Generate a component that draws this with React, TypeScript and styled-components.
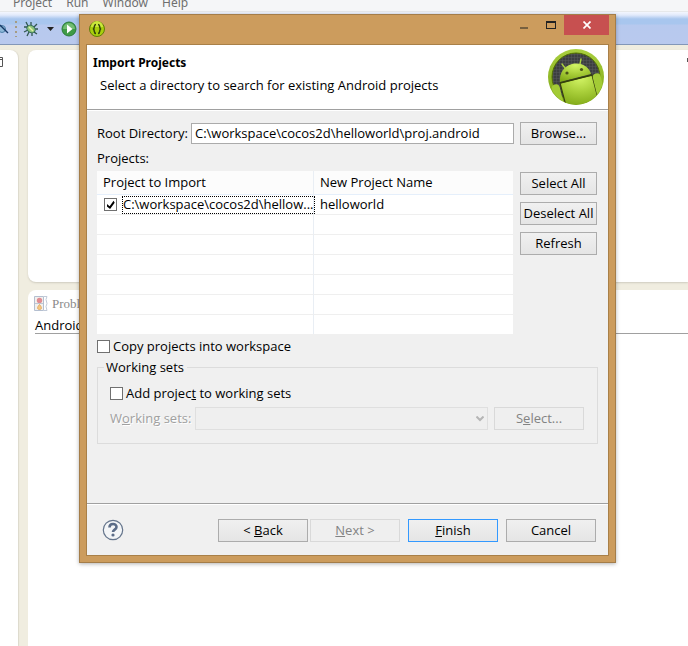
import React from "react";
import styled, { createGlobalStyle } from "styled-components";

const GlobalStyle = createGlobalStyle`
  *, *::before, *::after { box-sizing: border-box; }
  html, body { margin: 0; padding: 0; }
  body, button, input, select, table {
    font-family: "Open Sans", "Noto Sans", sans-serif;
    font-size: 13px;
    line-height: 16px;
    color: #000;
  }
`;

/* ---------- IDE behind the dialog ---------- */

const Workbench = styled.main`
  position: relative;
  display: flex;
  flex-direction: column;
  min-height: 100vh;
  overflow: hidden;
  background: #f0ede0;
`;

const MenuBar = styled.nav`
  display: flex;
  align-items: flex-end;
  gap: 14px;
  height: 12px;
  padding: 0 13px;
  background: #f5f6f8;
  border-bottom: 1px solid #e6e8ea;
`;

const MenuItem = styled.button`
  flex: none;
  padding: 0;
  border: 0;
  background: none;
  font-family: "Noto Sans", sans-serif;
  font-size: 12px;
  color: #6f6f6f;
`;

const Toolbar = styled.div`
  display: flex;
  align-items: center;
  height: 33px;
  padding-top: 2px;
  background: linear-gradient(#f3f6fe 0, #e2eafb 3px, #a8c6ee 7px, #a8c6ee 12px, #b7c9ee 13px, #b9c9ee 100%);
  border-bottom: 1px solid #8397b8;
`;

const ToolButton = styled.button<{ $width: number }>`
  display: flex;
  justify-content: center;
  width: ${(p) => p.$width}px;
  padding: 0;
  border: 0;
  background: none;
`;

const Grip = styled.span`
  width: 2px;
  height: 16px;
  margin: 0 4px 0 6px;
  background: repeating-linear-gradient(#a59b83 0 2px, transparent 2px 5px);
`;

const Panes = styled.div`
  display: flex;
  flex: 1;
  gap: 10px;
  padding-top: 5px;
`;

const SidePane = styled.aside`
  width: 18px;
  padding-top: 4px;
  background: #fff;
  border-radius: 0 8px 0 0;
  box-shadow: 1px 0 1px #dcd9cc;
`;

const Column = styled.div`
  display: flex;
  flex: 1;
  flex-direction: column;
  gap: 8px;
`;

const EditorPane = styled.section`
  display: flex;
  justify-content: flex-end;
  height: 232px;
  padding-top: 8px;
  background: #fff;
  border-radius: 8px 0 0 8px;
  box-shadow: 0 1px 2px #cfccbf;
`;

const EditorMark = styled.span`
  width: 1px;
  height: 4px;
  background: #555;
`;

const ProblemsPane = styled.section`
  flex: 1;
  padding: 5px 0 0 6px;
  background: #fff;
  border-radius: 8px 0 0 0;
`;

const PaneTab = styled.div`
  display: flex;
  align-items: center;
  gap: 4px;
  height: 18px;
  color: #8a8a8a;
  font-family: "Liberation Serif", serif;
`;

const PaneCaption = styled.div`
  margin-left: 1px;
  padding-top: 4px;
  border-bottom: 1px solid #a0a0a0;
`;

/* ---------- Dialog ---------- */

const Dialog = styled.section`
  position: absolute;
  top: 14px;
  left: 79px;
  right: 72px;
  padding: 0 6px 6px;
  border: 1px solid #a47d49;
  background: #cc9c5d;
  box-shadow: 0 1px 4px rgba(0, 0, 0, 0.3);
`;

const TitleBar = styled.header`
  display: flex;
  align-items: flex-start;
  justify-content: space-between;
  height: 29px;
`;

const AppIcon = styled.svg`
  margin: 5px 0 0 2px;
`;

const WindowButtons = styled.div`
  display: flex;
`;

const WindowButton = styled.button<{ $close?: boolean }>`
  display: flex;
  align-items: center;
  justify-content: center;
  width: ${(p) => (p.$close ? 45 : 27)}px;
  height: 20px;
  padding: 0;
  border: 0;
  background: ${(p) => (p.$close ? "#c75050" : "transparent")};
`;

const Client = styled.div`
  border: 1px solid #a98048;
  background: #f0f0f0;
`;

const Banner = styled.div`
  display: flex;
  justify-content: space-between;
  height: 64px;
  padding: 3px 3px 0 6px;
  background: #fff;
`;

const Title = styled.h1`
  margin: 7px 0 6px;
  font-family: "Noto Sans", sans-serif;
  font-size: 12px;
  line-height: 16px;
`;

const Subtitle = styled.p`
  margin: 0 0 0 7px;
`;

const Rule = styled.div`
  height: 2px;
  background: #fff;
  border-top: 1px solid #a0a0a0;
`;

const Body = styled.div`
  display: flex;
  flex-direction: column;
  padding: 11px 10px 59px;
`;

const Row = styled.div<{ $gap?: number }>`
  display: flex;
  align-items: center;
  gap: ${(p) => p.$gap ?? 6}px;
`;

const DirectoryRow = styled(Row)`
  padding-right: 1px;
`;

const Field = styled(Row)`
  flex: 1;
  min-width: 0;
`;

const FieldLabel = styled.label<{ $disabled?: boolean }>`
  flex: none;
  padding-bottom: 1px;
  color: ${(p) => (p.$disabled ? "#a0a0a0" : "#000")};
  text-shadow: ${(p) => (p.$disabled ? "1px 1px 0 #fff" : "none")};
`;

const TextBox = styled.input`
  flex: 1;
  min-width: 0;
  height: 21px;
  padding: 0 3px 2px;
  border: 1px solid #ababab;
  background: #fff;
`;

const PushButton = styled.button<{ $width?: number; $default?: boolean }>`
  flex: none;
  width: ${(p) => p.$width ?? 90}px;
  height: 23px;
  padding: 0 0 2px;
  border: 1px solid ${(p) => (p.$default ? "#3399ff" : "#acacac")};
  background: linear-gradient(#f0f0f0, #e5e5e5);
  white-space: nowrap;

  &:disabled {
    border-color: #d9d9d9;
    background: #efefef;
    color: #838383;
  }
`;

const ListCaption = styled.div`
  padding: 5px 0;
`;

const ListArea = styled.div`
  display: flex;
  align-items: flex-start;
  gap: 7px;
  padding-right: 1px;
`;

const Table = styled.table`
  flex: 1;
  width: 100%;
  table-layout: fixed;
  border-collapse: separate;
  border-spacing: 0;
  background: #fff;

  th, td {
    height: 20px;
    padding: 0 6px 1px;
    border-bottom: 1px solid #efefef;
    text-align: left;
    font-weight: normal;
    white-space: nowrap;
  }
  th {
    height: 24px;
    padding-bottom: 2px;
    background: #fcfcfc;
    border-bottom-color: #e5effb;
  }
  th:first-child, td:first-child {
    width: 217px;
    border-right: 1px solid #e9eef4;
  }
  td:first-child { padding: 0 1px 0 7px; }
  tbody tr:last-child td { height: 19px; border-bottom: 0; }
`;

const FocusText = styled.label`
  height: 18px;
  border: 1px dotted #000;
  line-height: 15px;
`;

const ButtonStack = styled.div`
  display: flex;
  flex-direction: column;
  gap: 7px;
  padding-top: 1px;
`;

const CheckBox = styled.input`
  flex: none;
  appearance: none;
  width: 13px;
  height: 13px;
  margin: 0;
  border: 1px solid #707070;
  background: #fff;

  &:checked::before {
    content: "";
    display: block;
    width: 11px;
    height: 11px;
    background: #000;
    clip-path: polygon(18% 45%, 42% 65%, 78% 16%, 88% 34%, 46% 90%, 18% 68%);
  }
`;

const CopyRow = styled(Row)`
  padding: 4px 0;
`;

const Group = styled.fieldset`
  display: flex;
  flex-direction: column;
  gap: 5px;
  min-width: 0;
  margin: 0;
  padding: 10px 13px 13px 12px;
  border: 1px solid #dcdcdc;
`;

const Legend = styled.legend`
  margin-left: -6px;
  padding: 0 3px 0 2px;
`;

const SelectWrap = styled.div`
  display: grid;
  flex: 1;
  align-items: center;

  > * { grid-area: 1 / 1; }
  > svg { z-index: 1; justify-self: end; margin-right: 4px; pointer-events: none; }
`;

const Select = styled.select`
  appearance: none;
  width: 100%;
  height: 23px;
  border: 1px solid #d9d9d9;
  border-radius: 0;
  background: #efefef;
`;

const Footer = styled.footer`
  display: flex;
  align-items: flex-start;
  justify-content: space-between;
  padding: 14px 12px 13px 15px;
`;

const HelpButton = styled.button`
  display: flex;
  padding: 0;
  border: 0;
  background: none;
`;

const ButtonPair = styled.div`
  display: flex;
  gap: 2px;
`;

/* ---------- Drawings ---------- */

const BugIcon = () => (
  <svg width="16" height="16" viewBox="0 0 16 16" fill="none">
    <path d="M3 1l2 4M8 1v3M1 6h4M1 11l4-2M4 15l2-4M9 15v-4M15 8h-4M14 3l-3 3M14 13l-3-2" stroke="#31564f" strokeWidth="1.3" />
    <ellipse cx="8" cy="8" rx="4.5" ry="3.4" transform="rotate(35 8 8)" fill="#8fc47c" stroke="#2c6651" />
    <path d="M6 6l4 4" stroke="#e6f3a8" strokeWidth="1.4" />
  </svg>
);

const RunIcon = () => (
  <svg width="16" height="16" viewBox="0 0 16 16">
    <circle cx="8" cy="8" r="7" fill="#3f9b46" stroke="#2b7c3b" />
    <path d="M2 8a6 6 0 0 1 12 0z" fill="#72bd72" />
    <path d="M6 3.5v9L11.5 8z" fill="#fff" />
  </svg>
);

const SearchOffIcon = () => (
  <svg width="9" height="12" viewBox="0 0 9 12" fill="none">
    <circle cx="2" cy="6" r="3.5" fill="#8eb8d8" stroke="#4b7fa8" />
    <path d="M0 2l8 8" stroke="#173765" strokeWidth="1.3" />
  </svg>
);

const ProblemsIcon = () => (
  <svg width="14" height="16" viewBox="0 0 14 16">
    <path d="M.5.5h9v14h-9z" fill="#f2f0ed" stroke="#b4bfd0" />
    <path d="M10 .5h3l-1 3 1 4-1 3 1 4h-3" fill="#fff" stroke="#c1cad8" />
    <circle cx="5.5" cy="4.5" r="2.7" fill="#e08d92" />
    <path d="M5.5 8.500c2 2 3 5 0 5s-2-3 0-5z" fill="#f6c983" stroke="#e3ad67" />
    <path d="M1 7.5h8" stroke="#bfc7d2" />
  </svg>
);

const AndroidBadge = () => (
  <svg width="58" height="58" viewBox="0 0 58 58">
    <defs>
      <linearGradient id="rim" x1="0" y1="0" x2="0" y2="1">
        <stop offset="0" stopColor="#a9cf3e" />
        <stop offset="1" stopColor="#7ba312" />
      </linearGradient>
      <radialGradient id="skin" cx=".5" cy=".1" r=".9">
        <stop offset="0" stopColor="#d2f465" />
        <stop offset=".5" stopColor="#a9cf3a" />
        <stop offset="1" stopColor="#82aa18" />
      </radialGradient>
      <pattern id="mesh" width="3" height="3" patternUnits="userSpaceOnUse">
        <rect width="3" height="3" fill="#3c3e40" />
        <path d="M0 0h3M0 0v3" stroke="#56585a" />
      </pattern>
      <clipPath id="disc"><circle cx="29" cy="29" r="27.5" /></clipPath>
      <clipPath id="hole"><circle cx="29" cy="29" r="24" /></clipPath>
    </defs>
    <circle cx="29" cy="29" r="28" fill="url(#rim)" />
    <circle cx="29" cy="29" r="24" fill="url(#mesh)" stroke="#527000" />
    <g clipPath="url(#disc)">
      <path d="M13 35L45 27l8 31H19z" fill="url(#skin)" stroke="#37400e" strokeWidth="1.2" />
      <rect x="7" y="36" width="8" height="26" rx="4" fill="#a3cb35" transform="rotate(-14 11 49)" />
      <rect x="48" y="25" width="8" height="26" rx="4" fill="#a3cb35" transform="rotate(-14 52 38)" />
    </g>
    <g clipPath="url(#hole)" fill="none">
      <path d="M18 20l-3-4M33 16l1-5" stroke="#a9d13e" strokeWidth="1.4" strokeLinecap="round" />
      <path d="M13 34C12 25 17 18 25 16c10-2 17 3 19 10z" fill="url(#skin)" />
    </g>
    <path d="M13 35L45 27" stroke="#33400b" strokeWidth="1.4" />
    <circle cx="20" cy="25" r="1.6" fill="#4a5418" />
    <circle cx="34.5" cy="21.5" r="1.6" fill="#4a5418" />
  </svg>
);

const HelpIcon = () => (
  <svg width="22" height="22" viewBox="0 0 22 22" fill="none">
    <circle cx="11" cy="11" r="9.7" fill="#f3f5f7" stroke="#65758c" strokeWidth="1.2" />
    <path d="M7.5 8.500C7.5 4 14.5 4 14.5 8c0 2.600-3.500 2.600-3.500 5" stroke="#5c6d88" strokeWidth="2.6" />
    <circle cx="11" cy="16" r="1.6" fill="#5c6d88" />
  </svg>
);

const emptyRows = [0, 1, 2, 3, 4, 5];

export default function App() {
  return (
    <Workbench>
      <GlobalStyle />
      <MenuBar>
        <MenuItem>Project</MenuItem>
        <MenuItem>Run</MenuItem>
        <MenuItem>Window</MenuItem>
        <MenuItem>Help</MenuItem>
      </MenuBar>
      <Toolbar>
        <ToolButton $width={9} aria-label="Search"><SearchOffIcon /></ToolButton>
        <Grip />
        <ToolButton $width={20} aria-label="Debug"><BugIcon /></ToolButton>
        <ToolButton $width={18} aria-label="Debug options">
          <svg width="7" height="4" viewBox="0 0 7 4"><path d="M0 0h7L3.5 4z" fill="#222" /></svg>
        </ToolButton>
        <ToolButton $width={20} aria-label="Run"><RunIcon /></ToolButton>
      </Toolbar>
      <Panes>
        <SidePane>
          <svg width="3" height="10" viewBox="0 0 3 10" fill="none"><path d="M0 .5h2.500v9H0M0 2.500h2" stroke="#555" /></svg>
        </SidePane>
        <Column>
          <EditorPane><EditorMark /></EditorPane>
          <ProblemsPane>
            <PaneTab><ProblemsIcon />Problems</PaneTab>
            <PaneCaption>Android</PaneCaption>
          </ProblemsPane>
        </Column>
      </Panes>

      <Dialog role="dialog" aria-labelledby="dialog-title">
        <TitleBar>
          <AppIcon width="18" height="18" viewBox="0 0 18 18" fill="none">
            <circle cx="9" cy="9" r="7.5" fill="#a8cf0c" stroke="#5f7d0a" />
            <path d="M3 7a6 6 0 0 1 12 0" fill="#cbe83c" />
            <path d="M8 4.500C5.500 4.500 7 7.500 5.500 9c1.500 1.500 0 4.500 2.500 4.500M10 4.500c2.500 0 1 3 2.500 4.500-1.500 1.500 0 4.500-2.500 4.500" stroke="#33440a" strokeWidth="1.5" />
          </AppIcon>
          <WindowButtons>
            <WindowButton aria-label="Minimize">
              <svg width="8" height="8" viewBox="0 0 8 8"><path d="M0 6h8v2H0z" fill="#77603f" /></svg>
            </WindowButton>
            <WindowButton aria-label="Maximize">
              <svg width="10" height="8" viewBox="0 0 10 8" fill="#222"><path fillRule="evenodd" d="M0 0h10v8H0zM1 2v5h8V2z" /></svg>
            </WindowButton>
            <WindowButton $close aria-label="Close">
              <svg width="8" height="8" viewBox="0 0 8 8"><path d="M.5.5l7 7M7.5.5l-7 7" stroke="#fff" strokeWidth="1.7" /></svg>
            </WindowButton>
          </WindowButtons>
        </TitleBar>
        <Client>
          <Banner>
            <div>
              <Title id="dialog-title">Import Projects</Title>
              <Subtitle>Select a directory to search for existing Android projects</Subtitle>
            </div>
            <AndroidBadge />
          </Banner>
          <Rule />
          <Body>
            <DirectoryRow>
              <Field $gap={3}>
                <FieldLabel htmlFor="root">Root Directory:</FieldLabel>
                <TextBox id="root" defaultValue="C:\workspace\cocos2d\helloworld\proj.android" />
              </Field>
              <PushButton $width={77}>Browse...</PushButton>
            </DirectoryRow>
            <ListCaption>Projects:</ListCaption>
            <ListArea>
              <Table>
                <thead>
                  <tr><th>Project to Import</th><th>New Project Name</th></tr>
                </thead>
                <tbody>
                  <tr>
                    <td>
                      <Row $gap={5}>
                        <CheckBox id="project" type="checkbox" defaultChecked />
                        <FocusText htmlFor="project">C:\workspace\cocos2d\hellow...</FocusText>
                      </Row>
                    </td>
                    <td>helloworld</td>
                  </tr>
                  {emptyRows.map((row) => <tr key={row}><td /><td /></tr>)}
                </tbody>
              </Table>
              <ButtonStack>
                <PushButton $width={77}>Select All</PushButton>
                <PushButton $width={77}>Deselect All</PushButton>
                <PushButton $width={77}>Refresh</PushButton>
              </ButtonStack>
            </ListArea>
            <CopyRow $gap={3}>
              <CheckBox id="copy" type="checkbox" />
              <FieldLabel htmlFor="copy">Copy projects into workspace</FieldLabel>
            </CopyRow>
            <Group>
              <Legend>Working sets</Legend>
              <Row $gap={3}>
                <CheckBox id="add" type="checkbox" />
                <FieldLabel htmlFor="add">Add projec<u>t</u> to working sets</FieldLabel>
              </Row>
              <Row>
                <Field $gap={4}>
                  <FieldLabel htmlFor="sets" $disabled>W<u>o</u>rking sets:</FieldLabel>
                  <SelectWrap>
                    <Select id="sets" disabled />
                    <svg width="8" height="6" viewBox="0 0 8 6" fill="none"><path d="M.5.5L4 4 7.5.5" stroke="#b5b5b5" strokeWidth="2" /></svg>
                  </SelectWrap>
                </Field>
                <PushButton disabled>S<u>e</u>lect...</PushButton>
              </Row>
            </Group>
          </Body>
          <Rule />
          <Footer>
            <HelpButton aria-label="Help"><HelpIcon /></HelpButton>
            <Row $gap={8}>
              <ButtonPair>
                <PushButton>&lt; <u>B</u>ack</PushButton>
                <PushButton disabled><u>N</u>ext &gt;</PushButton>
              </ButtonPair>
              <PushButton $default><u>F</u>inish</PushButton>
              <PushButton>Cancel</PushButton>
            </Row>
          </Footer>
        </Client>
      </Dialog>
    </Workbench>
  );
}
